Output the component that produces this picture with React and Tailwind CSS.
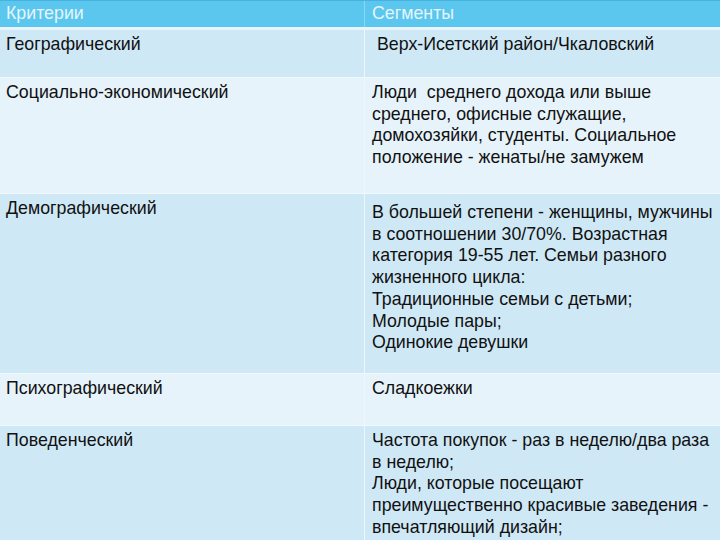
import React from "react";

const rows = [
  { h: "h-[48px]", bg: "bg-[#cfe8f6]", a: "Географический", b: [" Верх-Исетский район/Чкаловский"] },
  { h: "h-[116px]", bg: "bg-[#e6f3fb]", a: "Социально-экономический", b: ["Люди  среднего дохода или выше", "среднего, офисные служащие,", "домохозяйки, студенты. Социальное", "положение - женаты/не замужем"] },
  { h: "h-[180px]", bg: "bg-[#cfe8f6]", a: "Демографический", b: ["В большей степени - женщины, мужчины", "в соотношении 30/70%. Возрастная", "категория 19-55 лет. Семьи разного", "жизненного цикла:", "Традиционные семьи с детьми;", "Молодые пары;", "Одинокие девушки"], extra: true },
  { h: "h-[52px]", bg: "bg-[#e6f3fb]", a: "Психографический", b: ["Сладкоежки"] },
  { h: "h-[120px]", bg: "bg-[#cfe8f6]", a: "Поведенческий", b: ["Частота покупок - раз в неделю/два раза", "в неделю;", "Люди, которые посещают", "преимущественно красивые заведения -", "впечатляющий дизайн;"] },
];

export default function App() {
  return (
    <div className="w-[720px] h-[540px] overflow-hidden bg-[#cfe8f6] text-[#111] text-[17.8px] leading-[21.7px] whitespace-pre" style={{ fontFamily: '"Liberation Sans", Arial, sans-serif' }}>
      <div className="grid grid-cols-[365px_1fr] h-[27px] bg-[#5bc7ef] border-t border-[#45b2e0] text-[#e4f5fc]">
        <div className="pl-[6px] pt-[2px] border-r border-[#8fd6f3]">Критерии</div>
        <div className="pl-[7px] pt-[2px]">Сегменты</div>
      </div>
      <div className="h-[3px] bg-[#e9f5fb]" />
      {rows.map((r, i) => (
        <div key={i} className={`grid grid-cols-[365px_1fr] ${r.h} ${r.bg} border-b border-[#f2f9fd]`}>
          <div className="pl-[6px] pt-[4px] border-r border-[#edf7fc]">{r.a}</div>
          <div className={r.extra ? "pl-[7px] pt-[8px]" : "pl-[7px] pt-[4px]"}>
            {r.b.map((l, j) => (
              <div key={j}>{l}</div>
            ))}
          </div>
        </div>
      ))}
    </div>
  );
}
